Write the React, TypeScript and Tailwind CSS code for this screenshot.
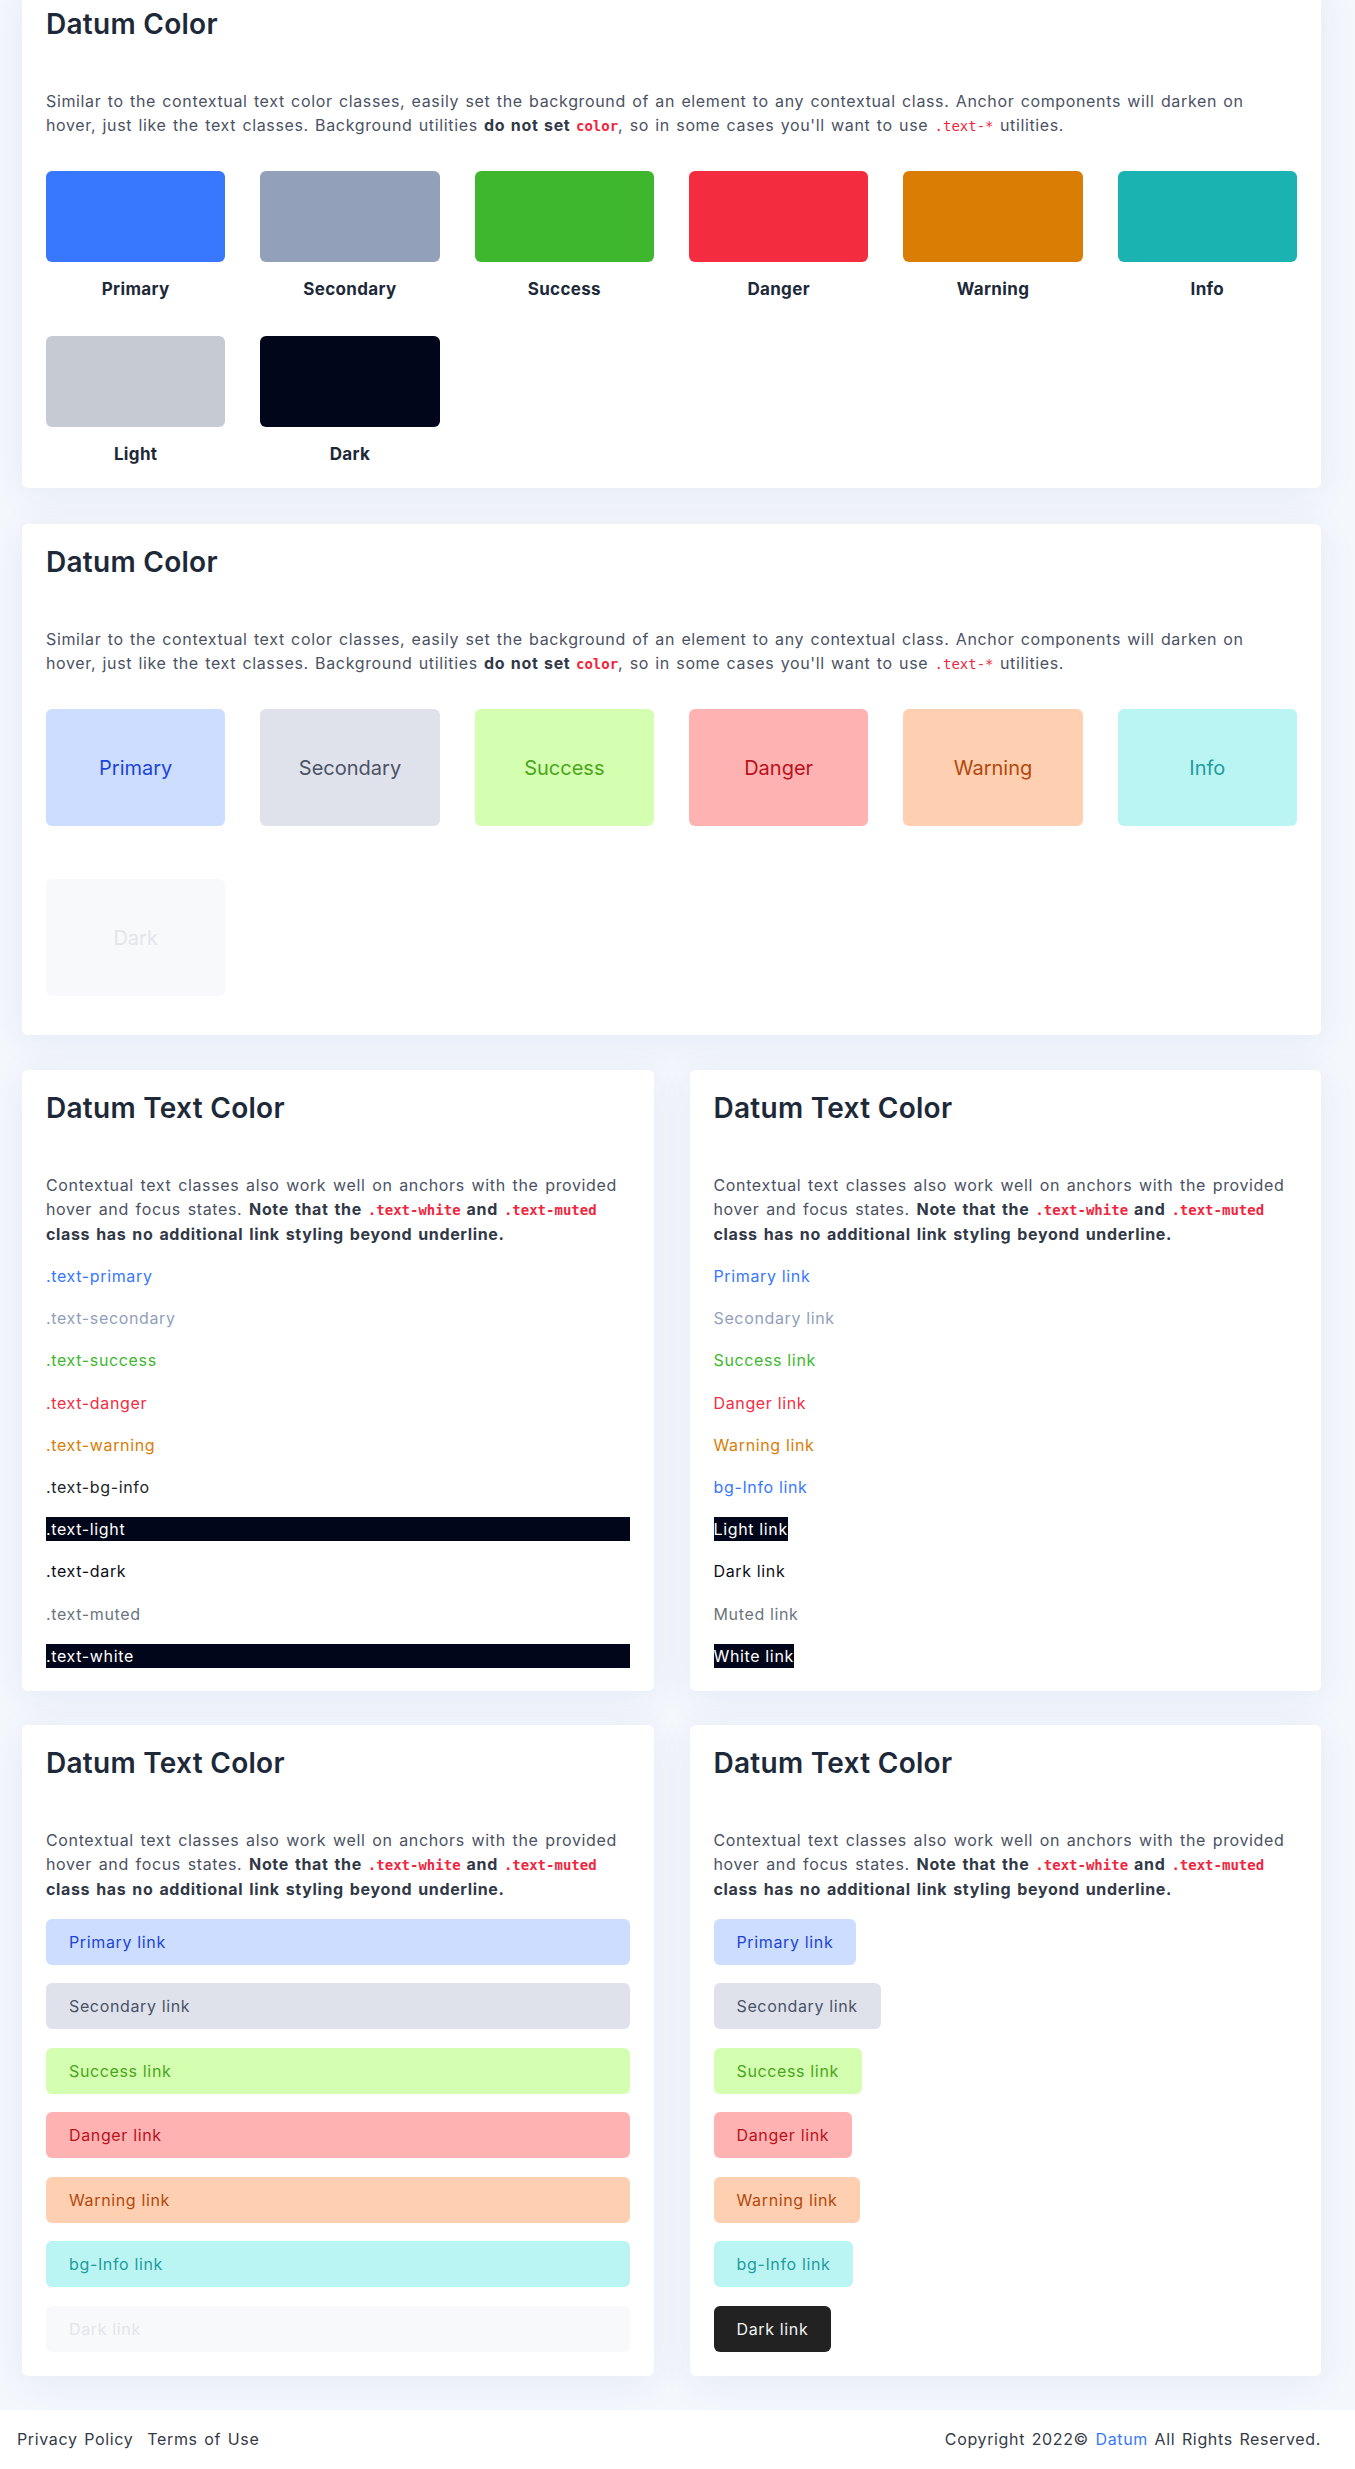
import React from "react";

const Code = ({ children, bold }: { children: React.ReactNode; bold?: boolean }) => (
  <code
    className={
      "font-['DejaVu_Sans_Mono','Liberation_Mono',monospace] text-[14px] tracking-normal [word-spacing:0px] text-[#f0253e] " +
      (bold ? "font-bold" : "font-normal")
    }
  >
    {children}
  </code>
);

const Card = ({
  title,
  children,
  className = "",
}: {
  title: string;
  children: React.ReactNode;
  className?: string;
}) => (
  <div className={"bg-white rounded-md shadow-[0_6px_40px_rgba(30,60,140,0.07)] px-6 pt-[21px] " + className}>
    <h3 className="text-[28px] leading-[34px] font-semibold tracking-[0.01em] text-[#1d2939] mb-[48px]">{title}</h3>
    {children}
  </div>
);

const BgPara = () => (
  <p className="max-w-[1215px] text-[16px] leading-[24px] tracking-[0.04em] [word-spacing:1.2px] text-[#4b5263]">
    Similar to the contextual text color classes, easily set the background of an element to any contextual class.
    Anchor components will darken on hover, just like the text classes. Background utilities{" "}
    <strong className="font-bold text-[#313846]">
      do not set <Code bold>color</Code>
    </strong>
    , so in some cases you'll want to use <Code>.text-*</Code> utilities.
  </p>
);

const TextPara = () => (
  <p className="text-[16px] leading-[24px] tracking-[0.04em] [word-spacing:1.6px] text-[#4b5263] mb-[18px]">
    Contextual text classes also work well on anchors with the provided hover and focus states.{" "}
    <strong className="font-bold text-[#313846]">
      Note that the <Code bold>.text-white</Code> and <Code bold>.text-muted</Code> class has no additional link
      styling beyond underline.
    </strong>
  </p>
);

const solid = [
  { name: "Primary", bg: "bg-[#3877ff]" },
  { name: "Secondary", bg: "bg-[#92a0ba]" },
  { name: "Success", bg: "bg-[#3eb72e]" },
  { name: "Danger", bg: "bg-[#f42c3f]" },
  { name: "Warning", bg: "bg-[#d97d05]" },
  { name: "Info", bg: "bg-[#1bb2b2]" },
  { name: "Light", bg: "bg-[#c6cad2]" },
  { name: "Dark", bg: "bg-[#02061a]" },
];

const soft = [
  { name: "Primary", cls: "bg-[#cdddff] text-[#1d44d8]" },
  { name: "Secondary", cls: "bg-[#dfe2ea] text-[#4a5268]" },
  { name: "Success", cls: "bg-[#d4feb0] text-[#48a61b]" },
  { name: "Danger", cls: "bg-[#ffb2b2] text-[#b9111c]" },
  { name: "Warning", cls: "bg-[#fecfb1] text-[#b3480c]" },
  { name: "Info", cls: "bg-[#baf5f4] text-[#1f9c9c]" },
  { name: "Dark", cls: "bg-[#f8f9fb] text-[#e3e5ea]" },
];

const textItems = [
  { label: ".text-primary", cls: "text-[#3877ff]" },
  { label: ".text-secondary", cls: "text-[#92a0ba]" },
  { label: ".text-success", cls: "text-[#3eb72e]" },
  { label: ".text-danger", cls: "text-[#f42c3f]" },
  { label: ".text-warning", cls: "text-[#d97d05]" },
  { label: ".text-bg-info", cls: "text-[#212529]" },
  { label: ".text-light", cls: "text-white bg-[#02061a]" },
  { label: ".text-dark", cls: "text-[#0b0d17]" },
  { label: ".text-muted", cls: "text-[#6c757d]" },
  { label: ".text-white", cls: "text-white bg-[#02061a]" },
];

const linkItems = [
  { label: "Primary link", cls: "text-[#3877ff]" },
  { label: "Secondary link", cls: "text-[#92a0ba]" },
  { label: "Success link", cls: "text-[#3eb72e]" },
  { label: "Danger link", cls: "text-[#f42c3f]" },
  { label: "Warning link", cls: "text-[#d97d05]" },
  { label: "bg-Info link", cls: "text-[#3877ff]" },
  { label: "Light link", cls: "text-white bg-[#02061a]" },
  { label: "Dark link", cls: "text-[#0b0d17]" },
  { label: "Muted link", cls: "text-[#6c757d]" },
  { label: "White link", cls: "text-white bg-[#02061a]" },
];

const blocks = [
  { label: "Primary link", cls: "bg-[#cdddff] text-[#1d44d8]" },
  { label: "Secondary link", cls: "bg-[#dfe2ea] text-[#4a5268]" },
  { label: "Success link", cls: "bg-[#d4feb0] text-[#48a61b]" },
  { label: "Danger link", cls: "bg-[#ffb2b2] text-[#b9111c]" },
  { label: "Warning link", cls: "bg-[#fecfb1] text-[#b3480c]" },
  { label: "bg-Info link", cls: "bg-[#baf5f4] text-[#1f9c9c]" },
];

export default function App() {
  return (
    <div className="bg-[#f4f7fc] font-['Inter',sans-serif]">
      <div className="pl-[22px] pr-[34px] mt-[-14px] pb-[34px] flex flex-col">
        <Card title="Datum Color" className="pb-[22px]">
          <BgPara />
          <div className="grid grid-cols-6 gap-x-[35px] gap-y-[35px] mt-[33px]">
            {solid.map((s) => (
              <div key={s.name} className="flex flex-col">
                <div className={"h-[91px] rounded-md " + s.bg} />
                <div className="mt-[15px] text-center text-[17px] leading-[24px] font-bold tracking-[0.02em] text-[#1d2939]">
                  {s.name}
                </div>
              </div>
            ))}
          </div>
        </Card>

        <Card title="Datum Color" className="pb-[39px] mt-[36px]">
          <BgPara />
          <div className="grid grid-cols-6 gap-x-[35px] gap-y-[53px] mt-[33px]">
            {soft.map((s) => (
              <div
                key={s.name}
                className={"h-[117px] rounded-md flex items-center justify-center text-[20px] " + s.cls}
              >
                {s.name}
              </div>
            ))}
          </div>
        </Card>

        <div className="grid grid-cols-2 gap-x-[36px] mt-[35px]">
          <Card title="Datum Text Color" className="pb-[23px]">
            <TextPara />
            <div className="flex flex-col gap-[18.2px]">
              {textItems.map((t) => (
                <p key={t.label} className={"text-[16px] leading-[24px] tracking-[0.04em] " + t.cls}>
                  {t.label}
                </p>
              ))}
            </div>
          </Card>
          <Card title="Datum Text Color" className="pb-[23px]">
            <TextPara />
            <div className="flex flex-col gap-[18.2px] items-start">
              {linkItems.map((t) => (
                <a key={t.label} className={"text-[16px] leading-[24px] tracking-[0.04em] " + t.cls}>
                  {t.label}
                </a>
              ))}
            </div>
          </Card>
        </div>

        <div className="grid grid-cols-2 gap-x-[36px] mt-[34px]">
          <Card title="Datum Text Color" className="pb-[24px]">
            <TextPara />
            <div className="flex flex-col gap-[18.5px]">
              {blocks.map((b) => (
                <a
                  key={b.label}
                  className={"h-[46px] rounded-md px-[23px] flex items-center text-[16px] tracking-[0.04em] " + b.cls}
                >
                  {b.label}
                </a>
              ))}
              <a className="h-[46px] rounded-md px-[23px] flex items-center text-[16px] tracking-[0.04em] bg-[#f8f9fb] text-[#e3e5ea]">
                Dark link
              </a>
            </div>
          </Card>
          <Card title="Datum Text Color" className="pb-[24px]">
            <TextPara />
            <div className="flex flex-col gap-[18.5px] items-start">
              {blocks.map((b) => (
                <a
                  key={b.label}
                  className={"h-[46px] rounded-md px-[23px] flex items-center text-[16px] tracking-[0.04em] " + b.cls}
                >
                  {b.label}
                </a>
              ))}
              <a className="h-[46px] rounded-md px-[23px] flex items-center text-[16px] tracking-[0.04em] bg-[#222222] text-[#f3f3f3]">
                Dark link
              </a>
            </div>
          </Card>
        </div>
      </div>

      <footer className="bg-white h-[58px] flex items-center justify-between pl-[17px] pr-[34px] text-[16px] tracking-[0.04em] [word-spacing:1.5px] text-[#343a46]">
        <div className="flex gap-[14px]">
          <a>Privacy Policy</a>
          <a>Terms of Use</a>
        </div>
        <p>
          Copyright 2022© <a className="text-[#3877ff]">Datum</a> All Rights Reserved.
        </p>
      </footer>
    </div>
  );
}
